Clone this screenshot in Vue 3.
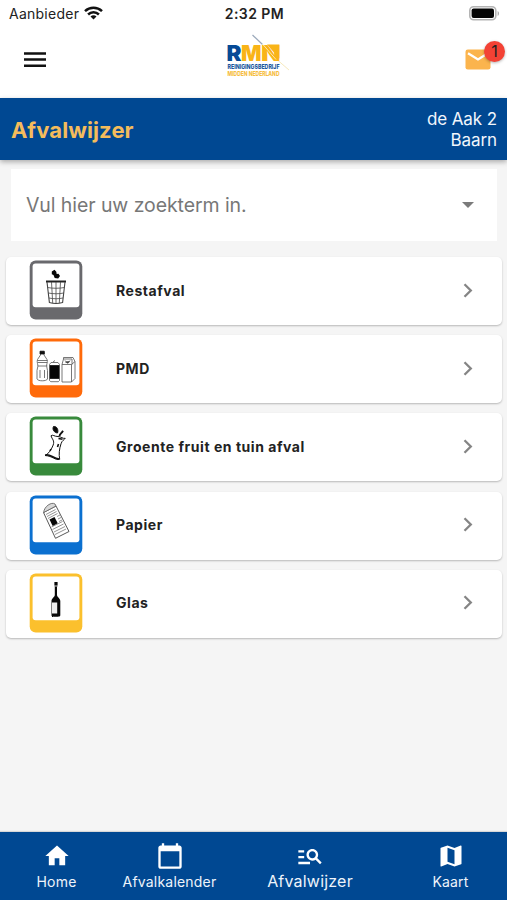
<script setup>
const items = [
  { id: 'rest', label: 'Restafval', color: '#69696d' },
  { id: 'pmd', label: 'PMD', color: '#ff6a0a' },
  { id: 'gft', label: 'Groente fruit en tuin afval', color: '#388a3c' },
  { id: 'papier', label: 'Papier', color: '#0b70d0' },
  { id: 'glas', label: 'Glas', color: '#fbc02d' },
]
const tabs = [
  { id: 'home', label: 'Home' },
  { id: 'calendar', label: 'Afvalkalender' },
  { id: 'guide', label: 'Afvalwijzer', active: true },
  { id: 'map', label: 'Kaart' },
]
</script>

<template>
  <div class="screen">
    <div class="status">
      <div class="carrier">
        <span>Aanbieder</span>
        <svg width="19" height="14" viewBox="0 0 19 14" fill="none" stroke="#111" stroke-width="2.5">
          <path d="M1 5.2C5.8.7 13.2.7 18 5.2" />
          <path d="M4.1 8.5c3-2.9 7.800-2.900 10.800 0" />
          <path d="M6.500 10.500c1.700-1.700 4.300-1.700 6 0l-3 3z" fill="#111" stroke="none" />
        </svg>
      </div>
      <div class="time">2:32 PM</div>
      <svg class="battery" width="31" height="15" viewBox="0 0 31 15">
        <rect x=".8" y=".8" width="26" height="13" rx="3.800" fill="#fff" stroke="#b4b4b4" stroke-width="1.600" />
        <rect x="2.600" y="2.600" width="22.400" height="9.400" rx="2" fill="#050505" />
        <path d="M28.600 5c1.900.8 1.900 4.200 0 5z" fill="#aaa" />
      </svg>
    </div>

    <header class="appbar">
      <svg class="menu" width="24" height="18" viewBox="0 0 24 18">
        <path d="M1 2.500h22M1 8.600h22M1 14.700h22" stroke="#111" stroke-width="2.500" />
      </svg>
      <svg class="logo" width="66" height="46" viewBox="0 0 66 46">
        <path d="M28.500 1l10 9.500" stroke="#9ba9bb" stroke-width="1.200" />
        <path d="M54 26.500l11 9.500" stroke="#f5e6b6" stroke-width=".9" />
        <text class="logo-main" x="2.500" y="26.500" textLength="15" lengthAdjust="spacingAndGlyphs" fill="#064a96">R</text>
        <text class="logo-main" x="17" y="26.500" textLength="20.500" lengthAdjust="spacingAndGlyphs" fill="#f9b417">M</text>
        <text class="logo-main" x="37" y="26.500" textLength="19.500" lengthAdjust="spacingAndGlyphs" fill="#f9b417">N</text>
        <path d="M43 10.500h12.300v14z" fill="#f9b417" />
        <path d="M38.500 10l13.500 15.500" stroke="#fff3d2" stroke-width=".8" />
        <text class="logo-sub" x="3.500" y="34.900" textLength="52" lengthAdjust="spacingAndGlyphs" fill="#17569d">REINIGINGSBEDRIJF</text>
        <text class="logo-sub" x="3.500" y="42.300" textLength="52" lengthAdjust="spacingAndGlyphs" fill="#f6bd3e">MIDDEN NEDERLAND</text>
      </svg>
      <div class="mail">
        <svg width="26" height="21" viewBox="0 0 26 21">
          <rect x=".5" y=".5" width="25" height="20" rx="2.300" fill="#fbb44d" />
          <path d="M3 4.300l10 6.200 10-6.200" fill="none" stroke="#fff" stroke-width="2.300" />
        </svg>
        <span class="badge">1</span>
      </div>
    </header>

    <div class="titlebar">
      <h1>Afvalwijzer</h1>
      <div class="address">de Aak 2<br />Baarn</div>
    </div>

    <main>
      <div class="search">
        <span>Vul hier uw zoekterm in.</span>
        <svg width="12" height="6" viewBox="0 0 12 6"><path d="M0 0h12L6 6z" fill="#7b7b7b" /></svg>
      </div>

      <div class="list">
        <div v-for="item in items" :key="item.id" class="card">
          <svg class="tile" width="54" height="60" viewBox="0 0 54 60">
            <rect x=".7" y=".5" width="52.600" height="59" rx="6" :fill="item.color" />
            <rect x="3.600" y="3.400" width="46.800" height="43.800" rx="3" fill="#fff" />
            <g v-if="item.id === 'rest'" fill="none" stroke="#444" stroke-width=".8">
              <path d="M22.800 11.500l2.700-1.700 1.800 2 .4 2.300 1.800-.3 1.500 2.200-1.800 2.500-3.500-.5-1.200-3-1.700-.8z" fill="#080808" stroke="none" />
              <path d="M17 21.500h20" stroke="#222" stroke-width="2" />
              <path d="M18 22l2.400 20.500c4 1.300 9 1.300 13.200 0L36 22" stroke-width="1.100" />
              <path d="M22.500 22l1.200 21M27 22v21.500M31.500 22l-1.200 21M18.500 27.500c5 1 12 1 17 0M19.200 33c5 1 11 1 15.600 0M19.900 38c5 1 9.500 1 14.200 0" />
            </g>
            <g v-else-if="item.id === 'pmd'" fill="none" stroke="#555" stroke-width=".8">
              <path d="M11.500 14h3.500v3l3 4.500c1 3-.8 5-.3 7l.8 4v8.500c-1 2.400-9.500 2.400-10.500 0v-8.500l.8-4c.5-2-1.300-4-.3-7l3-4.500z" />
              <path d="M11 13.200h4.300v2.800H11z" fill="#111" stroke="#111" />
              <path d="M8.500 22.500h10M8.800 24.500h9.400M8.800 28h9.400M11 32v8M15.500 32v8" />
              <path d="M20.800 27.500h9.400v13h-9.400z" fill="#050505" stroke="#111" />
              <path d="M20.500 26.500l1.500-2h7l1.500 2v16l-1.200 1.200h-7.500l-1.300-1.200zM24 24l2-1.500" />
              <path d="M33 26.500h9.500V44H33zM42.500 26.500l3.500-3v17L42.500 44M33 26.500l1.500-5.500h8.500v5.500M34.500 21v-1.500H44l2 4M36 22.500c2 2.500 4 2 5 0" />
              <path d="M36.500 24l4-.5-1.500 1.800z" fill="#222" />
            </g>
            <g v-else-if="item.id === 'gft'" fill="none" stroke="#111" stroke-width="1">
              <path d="M24.500 10.500c3.500-.5 5.200 3.500 4 6.500-3.300-.3-5.500-3.500-4-6.500z" fill="#080808" />
              <path d="M30.500 20c.2-2 2-2.500 3.500-5.300" stroke-width="1.800" />
              <path d="M22 19.800c2.200-1.600 3 .8 7 .7 3 0 5 2.500 7.200 1.800-1.200 2-3 1.800-4.200 5.500-1.800 5.500-2.300 10.500-1.300 15.500-4.500 1.300-7-3.300-14.700-3.800 3.600-1.500 6.700-6.500 8.200-10.500 1.500-4.500-1-5.500-2.200-9.200z" />
              <path d="M16.200 39.300c4-2 7 2.300 14 3.800M29.500 22.500l4 .8M22 33l-1 2M29.500 28l-1 3" stroke-width="1.600" />
            </g>
            <g v-else-if="item.id === 'papier'" fill="none" stroke="#666" stroke-width=".9">
              <path d="M14.500 17.500L27 11l13 25.500-13.500 6.800z" stroke="#444" />
              <path d="M14.700 17.500c.3-6 7.800-11 11.300-8.500l1 2z" fill="#d8d8d8" />
              <path d="M17 19.500l9.500-5M18 21.500l9.500-5M19 23.500l9.500-5M28 21.500l3-1.500M29 24l3-1.500M30 26.500l3-1.500M22.500 32l11-5.500M23.500 34.500l11-5.500M25 37l11-5.500M26 39.500l11-5.500" stroke-width=".7" />
              <path d="M20.500 24.500l5-2.500 3.200 6.200-5 2.800z" fill="#080808" stroke="none" />
            </g>
            <g v-else fill="#080808">
              <path d="M25.400 9h3.200v4.500H28v8.500c0 2 3.300 3.300 3.300 6v14c0 1.500-1 1.700-4.400 1.700s-4.400-.2-4.400-1.700V28c0-2.700 3.300-4 3.300-6v-8.500h-.4z" />
              <path d="M23 29.500h5.200v11H23z" fill="#eee" />
              <path d="M25 13h4" stroke="#fff" stroke-width=".8" />
            </g>
          </svg>
          <span class="label">{{ item.label }}</span>
          <svg class="chevron" width="10" height="15" viewBox="0 0 10 15">
            <path d="M1.500 1.200l6.300 6.300-6.300 6.300" fill="none" stroke="#858585" stroke-width="2.300" />
          </svg>
        </div>
      </div>
    </main>

    <nav>
      <div v-for="tab in tabs" :key="tab.id" class="tab" :class="{ active: tab.active }">
        <svg v-if="tab.id === 'home'" width="28" height="28" viewBox="0 0 24 24"><path d="M10 20v-6h4v6h5v-8h3L12 3 2 12h3v8z" fill="#fff" /></svg>
        <svg v-else-if="tab.id === 'calendar'" width="28" height="28" viewBox="0 0 24 24"><path d="M20 3h-1V1h-2v2H7V1H5v2H4c-1.100 0-2 .9-2 2v16c0 1.100.9 2 2 2h16c1.100 0 2-.9 2-2V5c0-1.100-.9-2-2-2zm0 18H4V8h16v13z" fill="#fff" /></svg>
        <svg v-else-if="tab.id === 'guide'" width="28" height="28" viewBox="0 0 24 24"><path d="M7 9H2V7h5v2zm0 3H2v2h5v-2zm13.590 7l-3.830-3.830c-.8.520-1.740.83-2.760.83-2.760 0-5-2.240-5-5s2.240-5 5-5 5 2.240 5 5c0 1.020-.31 1.960-.83 2.750L22 17.590 20.590 19zM17 11c0-1.650-1.350-3-3-3s-3 1.350-3 3 1.350 3 3 3 3-1.350 3-3zM2 19h10v-2H2v2z" fill="#fff" /></svg>
        <svg v-else width="28" height="28" viewBox="0 0 24 24"><path d="M20.500 3l-.16.030L15 5.100 9 3 3.360 4.900c-.21.070-.36.250-.36.480V20.500c0 .28.220.5.500.5l.16-.03L9 18.900l6 2.100 5.640-1.900c.21-.07.360-.25.360-.48V3.500c0-.28-.22-.5-.5-.5zM15 19l-6-2.110V5l6 2.110V19z" fill="#fff" /></svg>
        <span>{{ tab.label }}</span>
      </div>
    </nav>
  </div>
</template>

<style>
body {
  margin: 0;
  overflow: hidden;
}
</style>

<style scoped>
.screen {
  width: 507px;
  height: 900px;
  display: flex;
  flex-direction: column;
  background: #f5f5f5;
  font-family: Inter, "Liberation Sans", sans-serif;
  color: #222;
}
.status {
  height: 28px;
  box-sizing: border-box;
  padding: 0 7px 2px 9px;
  display: grid;
  grid-template-columns: 1fr auto 1fr;
  align-items: center;
  background: #fff;
  font-size: 14px;
}
.carrier {
  display: flex;
  align-items: center;
  gap: 5px;
  letter-spacing: 0.25px;
}
.time {
  font-weight: 600;
  letter-spacing: 0.45px;
}
.battery {
  justify-self: end;
}
.appbar {
  height: 70px;
  box-sizing: border-box;
  padding: 0 16px 0 23px;
  display: grid;
  grid-template-columns: 197px auto 1fr;
  background: #fff;
}
.menu {
  margin-top: 23px;
}
.logo {
  margin: 6px 0 0 4px;
  overflow: visible;
}
.logo-main {
  font: 900 22px Inter, sans-serif;
}
.logo-sub {
  font: 800 6.4px Inter, sans-serif;
}
.mail {
  position: relative;
  justify-self: end;
  width: 26px;
  height: 21px;
  margin: 21px 0 0;
}
.badge {
  position: absolute;
  left: 19px;
  top: -8px;
  width: 21px;
  height: 21px;
  border-radius: 50%;
  background: #f34235;
  box-shadow: 0 1px 3px rgba(0, 0, 0, 0.3);
  font-size: 16px;
  line-height: 21px;
  text-align: center;
}
.titlebar {
  position: relative;
  height: 62px;
  box-sizing: border-box;
  padding: 1px 10px 0 11px;
  display: flex;
  align-items: center;
  justify-content: space-between;
  background: #004892;
  box-shadow: 0 2px 5px rgba(0, 0, 0, 0.3);
}
h1 {
  margin: 0;
  color: #f4bc5c;
  font-size: 22px;
  font-weight: 700;
  letter-spacing: 0.1px;
}
.address {
  color: #f1f6fc;
  font-size: 17px;
  line-height: 21px;
  letter-spacing: -0.1px;
  text-align: right;
}
main {
  flex: 1;
}
.search {
  margin: 9px 10px 0 11px;
  height: 72px;
  box-sizing: border-box;
  padding: 0 23px 0 15px;
  display: flex;
  align-items: center;
  justify-content: space-between;
  background: #fff;
  color: #777;
  font-size: 19.5px;
  letter-spacing: -0.08px;
}
.list {
  margin: 16px 5px 0 6px;
  display: flex;
  flex-direction: column;
  gap: 10.2px;
}
.card {
  height: 68px;
  box-sizing: border-box;
  padding: 0 29px 2px 23px;
  display: flex;
  align-items: center;
  background: #fff;
  border-radius: 5px;
  box-shadow: 0 1px 2px rgba(0, 0, 0, 0.25);
}
.label {
  flex: 1;
  margin-left: 33px;
  font-size: 14px;
  font-weight: 700;
  letter-spacing: 0.54px;
}
nav {
  height: 68px;
  display: flex;
  background: #004892;
  box-shadow: 0 -1px 1px rgba(0, 0, 0, 0.12);
}
.tab {
  flex: 0 0 113px;
  display: flex;
  flex-direction: column;
  align-items: center;
  box-sizing: border-box;
  padding-top: 10px;
  color: #eef4fb;
  font-size: 14px;
  line-height: 24px;
  letter-spacing: 0.2px;
}
.tab.active {
  flex: 1;
  font-size: 16px;
  line-height: 22px;
}
</style>
